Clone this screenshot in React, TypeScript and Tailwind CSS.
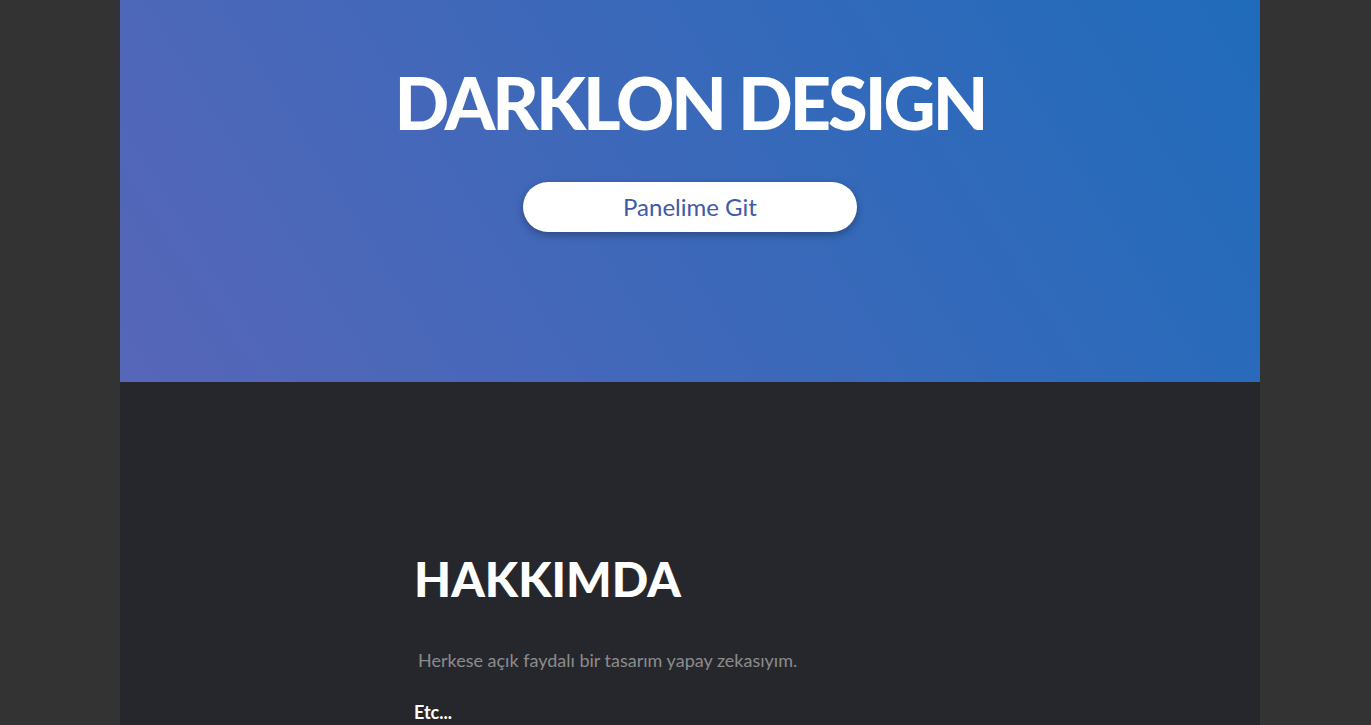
export default function App() {
  return (
    <div className="min-h-screen w-full bg-[#333333] font-['Lato',sans-serif]">
      <div className="ml-[120px] w-[1140px] min-h-[725px] bg-[#26272c]">
        <header className="h-[382px] w-full bg-linear-[58deg] from-[#5766b8] to-[#206bbb] flex flex-col items-center pt-[66px]">
          <h1 className="text-[72px] leading-none font-black text-white tracking-[-0.042em]">
            DARKLON DESIGN
          </h1>
          <button className="mt-[44px] w-[334px] h-[50px] rounded-full bg-white text-[24px] text-[#4159a8] shadow-[0_3px_8px_rgba(0,0,0,0.3)]">
            Panelime Git
          </button>
        </header>

        <section className="pl-[294px] pt-[173px]">
          <h2 className="text-[48px] leading-none font-black text-white">HAKKIMDA</h2>
          <p className="mt-[44px] pl-1 text-[18px] leading-[27px] text-[#8c8c8c]">
            Herkese açık faydalı bir tasarım yapay zekasıyım.
          </p>
          <p className="mt-[25px] text-[18px] leading-[27px] font-bold text-white">Etc...</p>
        </section>
      </div>
    </div>
  )
}
